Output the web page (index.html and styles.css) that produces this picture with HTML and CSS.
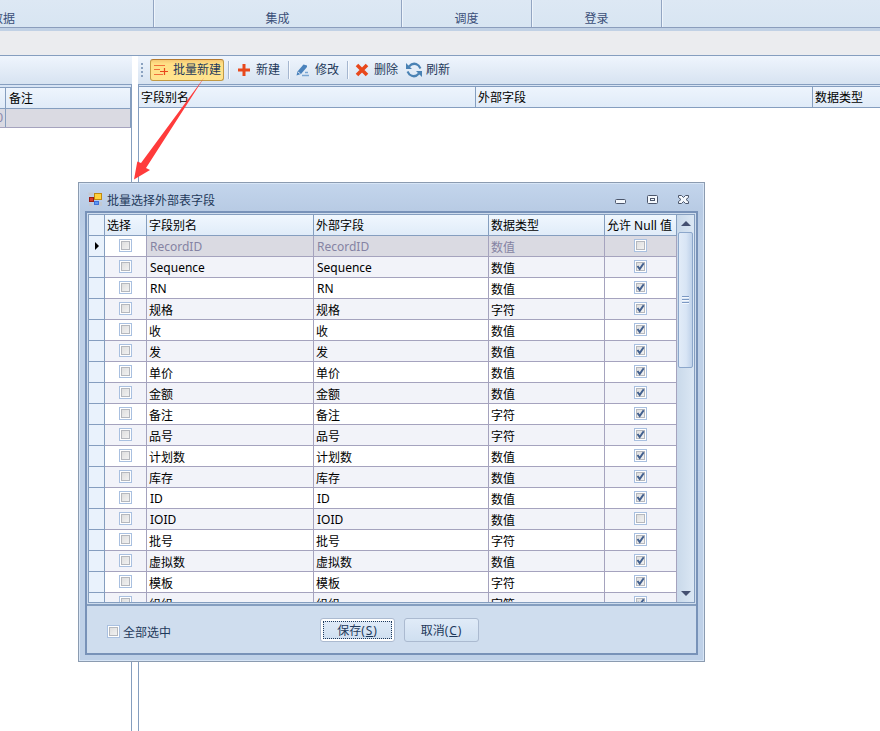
FILE: index.html
```html
<!DOCTYPE html>
<html lang="zh-CN">
<head>
    <meta charset="UTF-8">
    <meta name="viewport" content="width=device-width, initial-scale=1.0">
    <title>批量选择外部表字段</title>
    <link rel="stylesheet" href="styles.css">
</head>
<body>

    <div class="ribbon">
        <div class="ribbon-group group-data">数据</div>
        <div class="ribbon-group group-integration">集成</div>
        <div class="ribbon-group group-small">调度</div>
        <div class="ribbon-group group-small">登录</div>
        <div class="ribbon-rest"></div>
    </div>
    <div class="tab-strip"></div>

    <div class="workspace">
        <div class="left-pane">
            <div class="toolbar"></div>
            <div class="left-grid">
                <div class="left-row left-head"><span class="left-first"></span><span>备注</span></div>
                <div class="left-row left-selected"><span class="left-first">0</span><span></span></div>
            </div>
        </div>

        <div class="right-pane">
            <div class="toolbar">
                <div class="grip"><i></i><i></i><i></i><i></i></div>
                <button class="tool tool-batch active">
                    <svg width="16" height="16" viewBox="0 0 16 16">
                        <path d="M1 3.500h11M1 7.500h6M1 12.500h9" stroke="#f0703c" stroke-width="1.200" fill="none"/>
                        <path d="M7 9.500h8M11.500 6v7" stroke="#e8461c" stroke-width="1.200" fill="none"/>
                    </svg>
                    批量新建
                </button>
                <span class="separator"></span>
                <button class="tool tool-new">
                    <svg width="14" height="14" viewBox="0 0 14 14"><path d="M7 1v12M1 7h12" stroke="#e8481c" stroke-width="3"/></svg>
                    新建
                </button>
                <span class="separator"></span>
                <button class="tool tool-edit">
                    <svg width="14" height="14" viewBox="0 0 14 14">
                        <path d="M.5 12.500L1.500 8.500L7.500 1.500L11 2.500V4L5 11z" fill="#4a82bc"/>
                        <path d="M1.800 8.800L4.600 11" stroke="#dfe9f5"/>
                        <path d="M9 9.500h3M6 12.500h7" stroke="#7ba6d2" stroke-width="1.300"/>
                    </svg>
                    修改
                </button>
                <span class="separator"></span>
                <button class="tool tool-delete">
                    <svg width="14" height="14" viewBox="0 0 14 14"><path d="M2 2l10 10M12 2L2 12" stroke="#e8481c" stroke-width="3.600"/></svg>
                    删除
                </button>
                <button class="tool tool-refresh">
                    <svg width="16" height="16" viewBox="0 0 16 16">
                        <path d="M3 4.500Q7.500-.5 12.500 3.500L14.500 6.500" fill="none" stroke="#4a82b4" stroke-width="2.200"/>
                        <path d="M13 11.500Q8.500 16.500 3.500 12.500L1.500 9.500" fill="none" stroke="#4a82b4" stroke-width="2.200"/>
                        <path d="M0 1v6h6zM16 15V9h-6z" fill="#4a82b4"/>
                    </svg>
                    刷新
                </button>
            </div>
            <div class="field-head">
                <span>字段别名</span>
                <span>外部字段</span>
                <span>数据类型</span>
            </div>
        </div>
    </div>

    <svg class="arrow" width="80" height="105" viewBox="130 76 80 105">
        <path d="M134 179.500L137.300 161.500L141 163L204.500 77L146 168L150 170z" fill="#ff3b3b"/>
    </svg>

    <div class="dialog">
        <div class="title-bar">
            <svg width="15" height="15" viewBox="0 0 15 15">
                <path d="M.5 .5h5v3h-5zM1 11h3v3h-3zM11 10h3v4h-3z" fill="#c3c9d2"/>
                <rect x="6.500" y="1.500" width="7" height="6" fill="#ffd23c" stroke="#c08a10"/>
                <rect x="1.500" y="5.500" width="4" height="4" fill="#d63c2c" stroke="#9c1c14"/>
                <rect x="6.500" y="9.500" width="4" height="3" fill="#5b98f4" stroke="#3c70d8"/>
            </svg>
            <span class="title">批量选择外部表字段</span>
            <svg class="window-buttons" width="76" height="12" viewBox="0 0 76 12" fill="#f4f8fd" stroke="#4c566b">
                <rect x="1.500" y="5.500" width="10" height="4" rx="1"/>
                <rect x="33.500" y="1.500" width="10" height="8" rx="1"/>
                <rect x="36.500" y="4.500" width="4" height="2"/>
                <path d="M64.500 1.500h3l2 2 2-2h3v2l-2.500 2 2.500 2v2h-3l-2-2-2 2h-3v-2l2.500-2-2.500-2z"/>
            </svg>
        </div>

        <div class="dialog-frame">
            <div class="grid-area">
                <div class="grid-body">
                    <div class="grid-row grid-head">
                        <span></span>
                        <span>选择</span>
                        <span>字段别名</span>
                        <span>外部字段</span>
                        <span>数据类型</span>
                        <span>允许 Null 值</span>
                    </div>
                    <div id="rows"></div>
                </div>
                <div class="scrollbar">
                    <i class="scroll-up"></i>
                    <div class="thumb"><i></i><i></i><i></i></div>
                    <i class="scroll-down"></i>
                </div>
            </div>
            <div class="footer">
                <label class="select-all"><b class="check"></b>全部选中</label>
                <button class="btn btn-save"><span>保存<em>(<u>S</u>)</em></span></button>
                <button class="btn">取消<em>(<u>C</u>)</em></button>
            </div>
        </div>
    </div>

    <script>
        // name, data type, allows null
        const fields = [
            ['RecordID', '数值', false],
            ['Sequence', '数值', true],
            ['RN', '数值', true],
            ['规格', '字符', true],
            ['收', '数值', true],
            ['发', '数值', true],
            ['单价', '数值', true],
            ['金额', '数值', true],
            ['备注', '字符', true],
            ['品号', '字符', true],
            ['计划数', '数值', true],
            ['库存', '数值', true],
            ['ID', '数值', true],
            ['IOID', '数值', false],
            ['批号', '字符', true],
            ['虚拟数', '数值', true],
            ['模板', '字符', true],
            ['组组', '字符', true]
        ];
        const tick = '<svg width="9" height="9" viewBox="0 0 9 9"><path d="M1.500 4L3.700 7L7.700 1.200" fill="none" stroke="#42608f" stroke-width="2"/></svg>';

        // Latin names sit one pixel higher than Chinese ones
        const nameClass = name => /^[A-Za-z]/.test(name) ? 'latin' : '';

        document.getElementById('rows').innerHTML = fields.map(([name, type, allowNull], i) => `
            <div class="grid-row ${i === 0 ? 'current' : ''}">
                <span>${i === 0 ? '<i class="pointer"></i>' : ''}</span>
                <span class="center"><b class="check"></b></span>
                <span class="${nameClass(name)}">${name}</span>
                <span class="${nameClass(name)}">${name}</span>
                <span>${type}</span>
                <span class="center"><b class="check">${allowNull ? tick : ''}</b></span>
            </div>`).join('');
    </script>

</body>
</html>
```

FILE: styles.css
```css
*,
*::before {
    box-sizing: border-box;
}

body {
    margin: 0;
    height: 731px;
    overflow: hidden;
    background-color: white;
    color: #000;
    font-family: "Noto Sans", "Noto Sans CJK SC", sans-serif;
    font-size: 12px;
    line-height: 18px;
}

button {
    font: inherit;
    color: #1e395b;
}

svg {
    display: block;
    flex: none;
}

/* Ribbon */
.ribbon {
    display: flex;
    height: 28px;
    background: linear-gradient(#dde8f4, #d8e5f2);
    border-bottom: 1px solid #8b9dbc;
}

.ribbon-group {
    flex: none;
    padding-top: 10px;
    border-right: 1px solid #92a5c2;
    box-shadow: 1px 0 #eef4fb;
    text-align: center;
    color: #3b4f78;
}

.group-data {
    width: 301px;
    margin-left: -147px;
}

.group-integration {
    width: 248px;
}

.group-small {
    width: 130px;
}

.ribbon-rest {
    flex: 1;
}

.tab-strip {
    height: 28px;
    background-color: #ebecef;
    border-top: 3px solid #c1d1e5;
    border-bottom: 1px solid #859ebf;
}

/* Panes behind the dialog */
.workspace {
    display: flex;
    gap: 6px;
    height: 675px;
}

.left-pane {
    width: 132px;
    border-right: 1px solid #859ebf;
}

.right-pane {
    flex: 1;
    border-left: 1px solid #859ebf;
}

.toolbar {
    display: flex;
    align-items: center;
    height: 29px;
    background: linear-gradient(#eff5fd, #d7e3f1);
    border-bottom: 1px solid #859ebf;
}

.left-pane .toolbar {
    margin-right: -1px;
}

.right-pane .toolbar {
    margin-left: -1px;
    padding-left: 3px;
}

.left-grid {
    border-top: 2px solid #d7e4f4;
}

.left-row {
    display: flex;
    height: 19px;
    border-bottom: 1px solid #a5a3be;
    border-right: 1px solid #859ebf;
}

.left-head {
    height: 22px;
    border-top: 1px solid #859ebf;
    border-bottom: 1px solid #859ebf;
    background: linear-gradient(#eef5fd, #e0ebf8);
}

.left-row span {
    padding: 2px 3px;
}

.left-row .left-first {
    display: flex;
    justify-content: flex-end;
    flex: none;
    width: 6px;
    padding: 0 2px;
    border-right: 1px solid #859ebf;
}

.left-selected {
    background-color: #dadae2;
    color: #8a88aa;
}

.grip {
    display: grid;
    gap: 2px;
    margin-right: 7px;
}

.grip i {
    width: 2px;
    height: 2px;
    background-color: #8ba2c0;
}

.tool {
    display: flex;
    align-items: center;
    flex: none;
    height: 22px;
    padding: 0;
    border: 0;
    background: none;
    white-space: nowrap;
}

.tool-batch {
    width: 74px;
    gap: 4px;
    padding-left: 2px;
}

.tool.active {
    border: 1px solid #c29a45;
    border-top-color: #b5792f;
    border-radius: 3px;
    background: linear-gradient(#f6c873, #ffe086 20%, #ffe48f);
}

.tool-new {
    gap: 5px;
    margin: 0 8px 0 7px;
}

.tool-edit {
    gap: 5px;
    margin: 0 8px 0 6px;
}

.tool-delete {
    gap: 5px;
    margin: 0 8px 0 6px;
}

.tool-refresh {
    gap: 4px;
}

.separator {
    flex: none;
    width: 2px;
    height: 18px;
    background: linear-gradient(90deg, #a5b6cf 50%, #f7fafe 50%);
}

.tool-batch + .separator {
    margin-left: 4px;
}

.field-head {
    display: grid;
    grid-template-columns: 337px 337px 1fr;
    height: 23px;
    border-top: 1px solid #d7e4f4;
    border-bottom: 1px solid #859ebf;
    background: linear-gradient(#eef5fd, #e0ebf8);
}

.field-head span {
    padding: 2px 2px 0;
    border-top: 1px solid #859ebf;
    border-right: 1px solid #859ebf;
    white-space: nowrap;
}

.field-head span:last-child {
    border-right: 0;
}

.arrow {
    position: absolute;
    left: 130px;
    top: 76px;
}

/* Dialog window */
.dialog {
    position: absolute;
    left: 78px;
    top: 182px;
    width: 627px;
    height: 480px;
    padding: 0 6px 5px;
    border: 1px solid #8b9bb0;
    box-shadow: inset 0 0 0 1px #d7e5f6;
    background: linear-gradient(#c3d5ec, #b8cbe4 28px, #bfd1e8 60px);
}

.title-bar {
    display: flex;
    align-items: center;
    height: 28px;
    padding: 5px 8px 0 3px;
    color: #1e395b;
}

.title {
    margin-left: 4px;
    padding-top: 2px;
}

.window-buttons {
    margin-left: auto;
}

.dialog-frame {
    height: 444px;
    border: 2px solid #7892b8;
    background-color: #cfddee;
}

.grid-area {
    display: flex;
    height: 389px;
    margin: 1px 1px 0;
    border: 1px solid #859ebf;
    background-color: white;
    overflow: hidden;
}

.grid-body {
    width: 588px;
    height: 387px;
    overflow: hidden;
}

.grid-row {
    display: grid;
    grid-template-columns: 16px 42px 167px 175px 116px 72px;
    height: 21px;
}

.grid-row > span {
    padding: 3px 0 0 2px;
    border-right: 1px solid #a5a3be;
    border-bottom: 1px solid #a5a3be;
    line-height: 17px;
    white-space: nowrap;
}

.grid-row > .latin {
    padding: 2px 0 0 3px;
    line-height: 18px;
}

.grid-row > span:first-child {
    padding: 0;
    border-color: #859ebf;
    background-color: #e9f2fc;
}

.grid-row:nth-child(even) {
    background-color: #f2f3f9;
}

.grid-row.current {
    background-color: #dadae2;
    color: #8583a3;
}

.grid-row.current > span:nth-child(2) {
    background-color: white;
}

.grid-head {
    background: linear-gradient(#f0f7fe, #dfebf8);
}

.grid-head > span {
    padding-top: 2px;
    border-color: #859ebf;
}

.grid-row > .center {
    display: flex;
    justify-content: center;
    align-items: center;
    padding: 0 0 1px;
}

.pointer {
    display: block;
    margin: 6px 0 0 6px;
    width: 0;
    border: 4px solid transparent;
    border-left-color: #000;
    border-right: 0;
}

.check {
    display: block;
    flex: none;
    width: 13px;
    height: 13px;
    padding: 1px;
    border: 1px solid #a9c0e0;
    background: linear-gradient(135deg, #dcdcdc, #f4f4f4) content-box, #fff;
}

.check::before {
    content: "";
    display: block;
    height: 9px;
    border: 1px solid #b5b8be;
}

.check svg {
    margin-top: -9px;
}

.scrollbar {
    display: flex;
    flex-direction: column;
    align-items: center;
    width: 17px;
    padding: 6px 0;
    background: linear-gradient(90deg, #c9d9ea, #dbe7f4);
}

.scroll-up,
.scroll-down {
    border: 5px solid transparent;
    border-top: 0;
    border-bottom-color: #445071;
}

.thumb {
    display: flex;
    flex-direction: column;
    align-items: center;
    justify-content: center;
    gap: 1px;
    width: 15px;
    height: 136px;
    margin-top: 6px;
    border: 1px solid #8ca7cb;
    border-radius: 2px;
    background: linear-gradient(90deg, #e2ecf8, #d8e5f5 55%, #bed1e9);
}

.thumb i {
    width: 7px;
    height: 2px;
    border-bottom: 1px solid #f4f8fd;
    background-color: #7b98c3;
}

.scroll-down {
    margin-top: auto;
    border: 5px solid transparent;
    border-bottom: 0;
    border-top-color: #445071;
}

.footer {
    display: flex;
    height: 50px;
    margin-top: 1px;
    padding: 12px 0 0 20px;
    border-top: 2px solid #859ebf;
}

.select-all {
    display: flex;
    gap: 3px;
    width: 213px;
    padding-top: 6px;
    color: #1e395b;
}

.select-all .check {
    margin-top: 1px;
}

.btn {
    width: 75px;
    height: 24px;
    margin-right: 9px;
    padding: 1px 0 0;
    border: 1px solid #abbad0;
    border-radius: 3px;
    background: linear-gradient(#e0ebf8, #cfdff0);
}

.btn em {
    font-style: normal;
    letter-spacing: 0.9px;
}

.btn-save {
    padding: 2px;
    background: linear-gradient(#e0ebf8, #cfdff0) content-box, #fff;
}

.btn-save span {
    display: block;
    height: 18px;
    border: 1px dotted #1e395b;
    line-height: 17px;
}
```
